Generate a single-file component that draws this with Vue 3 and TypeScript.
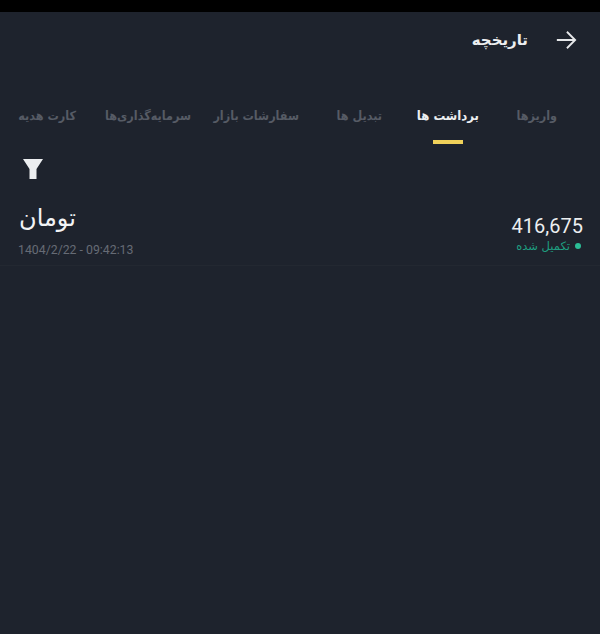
<script setup lang="ts">
const tabs = ['واریزها', 'برداشت ها', 'تبدیل ها', 'سفارشات بازار', 'سرمایه‌گذاری‌ها', 'کارت هدیه']
const activeTab = 'برداشت ها'
</script>

<template>
  <div class="screen" dir="rtl">
    <div class="status"></div>
    <header class="head">
      <svg class="back" width="24" height="24" viewBox="0 0 24 24" fill="none" stroke="#e6e8ea" stroke-width="2" aria-hidden="true">
        <path d="M2 12 H22 M13 3 L22 12 L13 21" />
      </svg>
      <h1 class="title">تاریخچه</h1>
    </header>
    <nav class="tabs">
      <div v-for="tab in tabs" :key="tab" class="tab" :class="{ 'tab--active': tab === activeTab }">
        <span class="tab__label">{{ tab }}</span>
      </div>
    </nav>
    <div class="filter-row">
      <svg width="22" height="22" viewBox="0 0 22 22" fill="#eceef0" aria-hidden="true">
        <path d="M1 1 H21 L14.5 11 V21 H7.5 V11 Z" />
      </svg>
    </div>
    <div class="row">
      <div class="row__side row__side--right">
        <div class="amount" dir="ltr">416,675</div>
        <div class="state"><span class="dot"></span>تکمیل شده</div>
      </div>
      <div class="row__side row__side--left">
        <div class="coin">تومان</div>
        <div class="date" dir="ltr">1404/2/22 - 09:42:13</div>
      </div>
    </div>
  </div>
</template>

<style>
html, body { margin: 0; background: #1e232d; }
</style>

<style scoped>
.screen {
  width: 600px;
  height: 634px;
  background: #1e232d;
  font-family: "DejaVu Sans", sans-serif;
  overflow: hidden;
}
.status { height: 12px; background: #000; }

.head {
  display: flex;
  align-items: center;
  gap: 27px;
  height: 56px;
  padding-right: 23px;
}
.back { flex-shrink: 0; width: 22px; height: 22px; }
.title { margin: 0; font-size: 15px; font-weight: 700; color: #eceef0; }

.tabs {
  display: grid;
  grid-template-columns: 78px 97px 83px 108px 115px 58px;
  align-items: start;
  padding: 29px 43px 0 18px;
  height: 52px;
  box-sizing: border-box;
  margin-top: 11px;
}
.tab {
  font-family: "DejaVu Sans Condensed", "DejaVu Sans", sans-serif;
  font-size: 12.5px;
  font-weight: 700;
  color: #565b65;
  white-space: nowrap;
}
.tab__label { position: relative; display: inline-block; }
.tab--active { color: #eceef0; font-size: 13px; }
.tab--active .tab__label::after {
  content: '';
  position: absolute;
  top: 32px;
  left: 50%;
  width: 30px;
  height: 4px;
  margin-left: -15px;
  background: #f0d15a;
}

.filter-row {
  display: flex;
  direction: ltr;
  justify-content: flex-start;
  padding: 27px 0 0 22px;
}

.row {
  display: flex;
  justify-content: space-between;
  align-items: flex-end;
  padding: 22px 17px 7px 18px;
  border-bottom: 1px solid #232831;
}
.row__side { display: flex; flex-direction: column; }
.row__side--right { margin-bottom: 4px; }
.row__side--left { align-items: flex-end; }
.coin { font-size: 24px; line-height: 32px; color: #f2f3f5; margin-left: 1px; }
.date { font-family: Roboto, sans-serif; font-size: 12.3px; color: #666b75; margin-top: 8px; line-height: 16px; }
.amount { font-family: Roboto, sans-serif; font-size: 20px; line-height: 24px; color: #eceef0; }
.state {
  display: flex;
  align-items: center;
  gap: 5px;
  font-size: 11.5px;
  line-height: 16px;
  color: #1f9e80;
  padding-right: 2px;
}
.dot { width: 6px; height: 6px; border-radius: 50%; background: #2bbd96; }
</style>
